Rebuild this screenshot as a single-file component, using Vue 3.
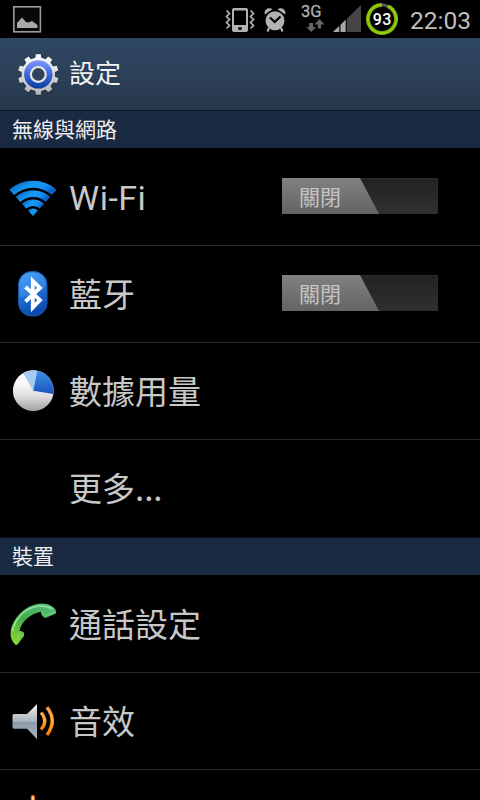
<template>
  <div class="screen">
    <div class="status-bar">
      <svg class="st-picture" width="30" height="38" viewBox="0 0 30 38">
        <rect x="0.8" y="6.800" width="26.600" height="25" fill="#080808" stroke="#9b9b9b" stroke-width="1.6" />
        <path d="M4 28V23L9 17.500L13 22L15.500 22.500L19 21L24.500 25V28Z" fill="#a9a9a9" />
      </svg>
      <div class="spacer"></div>
      <svg class="st-vibrate" width="30" height="38" viewBox="0 0 30 38">
        <rect x="7" y="8" width="16" height="24" rx="2" fill="#b2b2b2" />
        <rect x="9" y="10.5" width="12" height="14.5" fill="#000" />
        <rect x="13" y="27" width="4" height="3" rx="1" fill="#222" />
        <path d="M1.500 10.500L4.500 13.500L1.500 16.500L4.500 19.500L1.500 22.500L4.500 25.500L1.500 28.500M25.500 10.500L28.500 13.500L25.500 16.500L28.500 19.500L25.500 22.500L28.500 25.500L25.500 28.500" fill="none" stroke="#b2b2b2" stroke-width="1.7" />
      </svg>
      <svg class="st-alarm" width="22" height="38" viewBox="0 0 22 38">
        <path d="M5 28L3.5 31.5M17 28L18.5 31.5" stroke="#b2b2b2" stroke-width="2.2" />
        <circle cx="11" cy="20.7" r="9.5" fill="#b2b2b2" />
        <path d="M0.8 14.5C-0.5 9.5 5 6.5 8.5 9.2ZM21.2 14.5C22.5 9.5 17 6.5 13.5 9.2Z" fill="#b2b2b2" />
        <path d="M6 17.5L10.7 22L16.5 16.5" fill="none" stroke="#000" stroke-width="2.2" />
      </svg>
      <svg class="st-3g" width="26" height="38" viewBox="0 0 26 38">
        <text x="0" y="17.3" class="net-text">3G</text>
        <path d="M8.3 23H12V27H15L10.2 32L5.4 27H8.3Z" fill="#666" />
        <path d="M17 28.500V24.500H13.500L18.500 19L23.400 24.500H20V28.500Z" fill="#666" />
      </svg>
      <svg class="st-signal" width="29" height="38" viewBox="0 0 29 38">
        <path d="M0 32L28 5V32Z" fill="#454545" />
        <path d="M0 32L6.5 25.7V32ZM7.3 25V32H12.8V19.6Z" fill="#a8a8a8" />
        <path d="M6.9 25V32M13.3 18V32" stroke="#000" stroke-width="1" />
      </svg>
      <svg class="st-battery" width="32" height="38" viewBox="0 0 32 38">
        <circle cx="16" cy="19" r="14" fill="#000" stroke="#55585c" stroke-width="3" />
        <circle cx="16" cy="19" r="14" fill="none" stroke="#6f9c08" stroke-width="4" pathLength="100" stroke-dasharray="93 7" transform="rotate(-65 16 19)" />
        <circle cx="16" cy="19" r="14.2" fill="none" stroke="#93c90d" stroke-width="2.4" pathLength="100" stroke-dasharray="93 7" transform="rotate(-65 16 19)" />
        <text x="16.3" y="25" text-anchor="middle" class="batt-text">93</text>
      </svg>
      <span class="clock">22:03</span>
    </div>

    <div class="title-bar">
      <svg class="gear" width="44" height="46" viewBox="-22 -22 44 46">
        <defs>
          <linearGradient id="gearBody" gradientUnits="userSpaceOnUse" x1="0" y1="-20" x2="0" y2="20">
            <stop offset="0" stop-color="#fff" />
            <stop offset="1" stop-color="#b4b4b4" />
          </linearGradient>
          <linearGradient id="gearRing" x1="0" y1="0" x2="0" y2="1">
            <stop offset="0" stop-color="#8099ff" />
            <stop offset="0.5" stop-color="#3c68dc" />
            <stop offset="1" stop-color="#0a3c9c" />
          </linearGradient>
        </defs>
        <g transform="translate(0.3 0.4)">
          <path :d="gearPath" fill="#1a2430" opacity="0.6" transform="translate(0 1.3)" />
          <path :d="gearPath" fill="url(#gearBody)" />
          <circle r="14.2" fill="url(#gearRing)" />
          <circle r="7.4" fill="#2f445b" stroke="#e9e6e0" stroke-width="2.2" />
        </g>
      </svg>
      <span class="title-text">設定</span>
    </div>

    <template v-for="section in sections" :key="section.name">
      <div class="section-header">{{ section.name }}</div>
      <div v-for="item in section.items" :key="item.icon" class="row">
        <svg class="row-icon" width="48" height="48" viewBox="0 0 48 48">
          <template v-if="item.icon === 'wifi'">
            <defs>
              <linearGradient id="wifiFill" x1="0" y1="0" x2="1" y2="0.5">
                <stop offset="0" stop-color="#0752b4" />
                <stop offset="0.5" stop-color="#159af2" />
                <stop offset="0.75" stop-color="#158ff0" />
                <stop offset="1" stop-color="#0a62c4" />
              </linearGradient>
            </defs>
            <path v-for="(d, i) in wifiBands" :key="i" :d="d" fill="url(#wifiFill)" />
          </template>

          <template v-else-if="item.icon === 'bluetooth'">
            <defs>
              <linearGradient id="btFill" x1="0" y1="0" x2="0.3" y2="1">
                <stop offset="0" stop-color="#3f9bef" />
                <stop offset="0.5" stop-color="#2474dc" />
                <stop offset="1" stop-color="#0b4bb0" />
              </linearGradient>
            </defs>
            <rect x="9.5" y="2.5" width="28.5" height="44.5" rx="13" fill="url(#btFill)" stroke="#1759ad" />
            <path d="M10.5 28V15Q11 4 23.5 3.5Q36 4 37 15V17Q25 29 10.5 28Z" fill="#6bb5ff" opacity="0.25" />
            <path d="M16.5 18L31 31L23.800 38.500V12L31 19L16.500 32.500" fill="none" stroke="#fff" stroke-width="3.8" />
          </template>

          <template v-else-if="item.icon === 'data'">
            <defs>
              <linearGradient id="pieBase" x1="0" y1="0" x2="0" y2="1">
                <stop offset="0.3" stop-color="#fafafa" />
                <stop offset="0.65" stop-color="#dcdcdc" />
                <stop offset="1" stop-color="#a0a0a0" />
              </linearGradient>
              <linearGradient id="pieBlue" x1="0" y1="0" x2="0" y2="1">
                <stop offset="0" stop-color="#3b91e8" />
                <stop offset="1" stop-color="#1c54bc" />
              </linearGradient>
            </defs>
            <circle cx="24.3" cy="24.7" r="20.4" fill="url(#pieBase)" />
            <path d="M24.3 24.7L14 7.1A20.4 20.4 0 0 1 28.2 4.7Z" fill="#a3c9f1" />
            <path d="M24.3 24.7L28.2 4.7A20.4 20.4 0 0 1 44.5 28Z" fill="url(#pieBlue)" />
          </template>

          <template v-else-if="item.icon === 'call'">
            <defs>
              <linearGradient id="callFill" x1="0.8" y1="0" x2="0.1" y2="1">
                <stop offset="0" stop-color="#55bb7c" />
                <stop offset="0.5" stop-color="#43ac46" />
                <stop offset="1" stop-color="#8bd936" />
              </linearGradient>
            </defs>
            <path d="M6.7 46C3.5 43 1 38 1.7 33.5C2.5 22 13 8.5 27 5.3C34 3.5 41 5 45 8.7Q47 11 47 12.5V14.5L36.5 19Q32.5 18 31.7 12.8C22 14.5 12 22.5 10.5 32Q13 31.5 15 33.5V37L8.5 45.5Z" fill="url(#callFill)" />
            <path d="M3.3 32C6 19 17 8.5 29 7.2C35 6.5 40 8 43.5 10" fill="none" stroke="#b4efb6" stroke-width="1.5" opacity="0.75" />
            <path d="M32.5 13L36.5 16.5L46 13M10.5 33L9 39L14 35" fill="none" stroke="#9ce16d" stroke-width="1" opacity="0.6" />
          </template>

          <template v-else-if="item.icon === 'sound'">
            <defs>
              <linearGradient id="spkFill" x1="0" y1="0" x2="0" y2="1">
                <stop offset="0" stop-color="#f0f0f0" />
                <stop offset="0.5" stop-color="#a9b3ba" />
                <stop offset="0.52" stop-color="#8d9ba6" />
                <stop offset="1" stop-color="#a5b7c5" />
              </linearGradient>
              <linearGradient id="waveFill" x1="0" y1="0" x2="0" y2="1">
                <stop offset="0" stop-color="#fb9a50" />
                <stop offset="0.5" stop-color="#ffae2b" />
                <stop offset="1" stop-color="#f5780a" />
              </linearGradient>
            </defs>
            <path d="M3.5 19.5Q3.5 18 5 18H18L28 8V43L18 32.7H5Q3.5 32.7 3.5 31Z" fill="url(#spkFill)" />
            <path d="M32 16.5Q39.5 25 32 33.5" fill="none" stroke="url(#waveFill)" stroke-width="3.2" />
            <path d="M38 11.3Q48.5 25 38 39" fill="none" stroke="url(#waveFill)" stroke-width="3.4" />
          </template>

          <template v-else-if="item.icon === 'display'">
            <rect x="21.8" y="2" width="4.2" height="12" rx="2" fill="#f36a12" />
            <rect x="23" y="3" width="1.8" height="10" rx="0.9" fill="#ffd0a0" />
          </template>
        </svg>
        <span class="label" :class="{ latin: item.icon === 'wifi' }">{{ item.label }}</span>
        <div v-if="item.state" class="switch">
          <div class="thumb">{{ item.state }}</div>
        </div>
      </div>
    </template>
  </div>
</template>

<script setup>
const sections = [
  {
    name: '無線與網路',
    items: [
      { icon: 'wifi', label: 'Wi-Fi', state: '關閉' },
      { icon: 'bluetooth', label: '藍牙', state: '關閉' },
      { icon: 'data', label: '數據用量' },
      { icon: 'more', label: '更多...' }
    ]
  },
  {
    name: '裝置',
    items: [
      { icon: 'call', label: '通話設定' },
      { icon: 'sound', label: '音效' },
      { icon: 'display', label: '' }
    ]
  }
];

// One ring sector per wifi band, all fanning out from the bottom tip
const sector = (r1, r2) => {
  const a = (42 * Math.PI) / 180;
  const p = (r, s) => `${24 + s * r * Math.sin(a)} ${44 - r * Math.cos(a)}`;
  return `M${p(r2, -1)}A${r2} ${r2} 0 0 1 ${p(r2, 1)}L${p(r1, 1)}A${r1} ${r1} 0 0 0 ${p(r1, -1)}Z`;
};
const wifiBands = [sector(28.2, 35.3), sector(19, 25.8), sector(10, 16.600), sector(0.1, 7.5)];

// Gear outline, 10 teeth
const gearPath = (() => {
  const pts = [];
  for (let i = 0; i < 10; i++) {
    [[-10, 16.8], [-7, 20.4], [7, 20.4], [10, 16.8]].forEach(([off, r]) => {
      const a = ((i * 36 + off) * Math.PI) / 180;
      pts.push(`${(r * Math.sin(a)).toFixed(2)} ${(-r * Math.cos(a)).toFixed(2)}`);
    });
  }
  return `M${pts.join('L')}Z`;
})();
</script>

<style>
body { margin: 0; background: #000; }
</style>

<style scoped>
.screen { width: 480px; height: 800px; overflow: hidden; background: #000; font-family: "Noto Sans CJK TC", sans-serif; }

.status-bar { display: flex; height: 38px; padding: 0 9px 0 13px; box-sizing: border-box; }
.status-bar svg { flex: none; }
.spacer { flex: 1; }
.st-alarm { margin-left: 9px; }
.st-3g { margin-left: 15px; }
.st-signal { margin-left: 6px; }
.st-battery { margin-left: 4px; }
.net-text { font: 16.5px Roboto, sans-serif; fill: #b0b0b0; stroke: #b0b0b0; stroke-width: 0.3px; }
.batt-text { font: 500 16px Roboto, sans-serif; letter-spacing: 0.5px; fill: #fff; }
.clock { width: 61px; margin-left: 12px; font: 24.5px/41px Roboto, sans-serif; color: #bebebe; white-space: nowrap; }

.title-bar { display: flex; height: 72px; padding-left: 16px; box-sizing: border-box; background: linear-gradient(#30486a, #2c425a 50%, #26384c); background: linear-gradient(#304864, #2c4058 50%, #26374b); }
.gear { flex: none; margin-top: 14px; }
.title-text { margin-left: 9px; font-size: 26px; line-height: 68px; color: #f2f2f2; }

.section-header { height: 38px; padding-left: 12px; box-sizing: border-box; border-top: 1px solid #08121e; background: #1a2a42; font-size: 21px; line-height: 34px; color: #eee; }
.row + .section-header { margin-top: 1px; }

.row { display: flex; align-items: flex-start; height: 97px; padding: 0 42px 0 9px; box-sizing: border-box; }
.row + .row { box-shadow: inset 0 1px #2b2b2b; }
.row-icon { flex: none; margin-top: 24px; }
.label { flex: 1; margin-left: 12px; font-size: 33px; line-height: 97px; color: #c8c8c8; }
.label.latin { font-family: Roboto, sans-serif; font-size: 34px; letter-spacing: 0.5px; line-height: 101px; }

.switch { flex: none; width: 156px; height: 36px; margin-top: 30px; box-sizing: border-box; background: linear-gradient(#222, #303030); box-shadow: inset 0 0 0 1px #2b2b2b; }
.thumb { width: 97px; height: 36px; padding-left: 17px; box-sizing: border-box; background: linear-gradient(#808080, #646464); clip-path: polygon(0 0, 78px 0, 97px 100%, 0 100%); font-size: 21px; line-height: 37px; color: #c4c4c4; }
</style>
